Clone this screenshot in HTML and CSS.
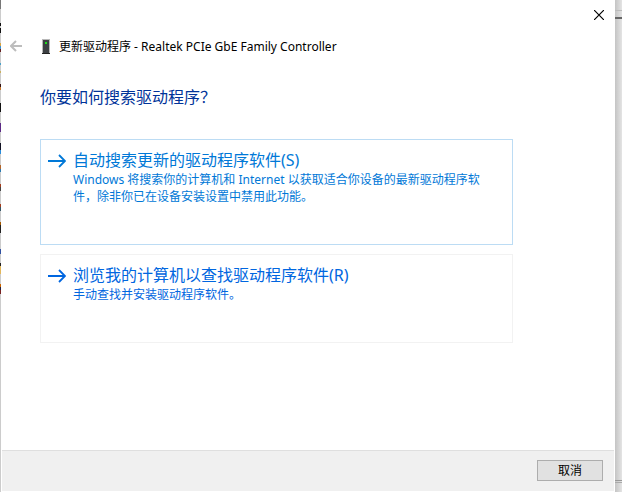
FILE: index.html
```html
<!DOCTYPE html>
<html lang="zh-CN">
<head>
    <meta charset="UTF-8">
    <meta name="viewport" content="width=device-width, initial-scale=1.0">
    <title>更新驱动程序</title>
    <link rel="stylesheet" href="styles.css">
</head>
<body>

<div class="edge-left"></div>

<div class="dialog">
    <div class="titlebar">
        <button type="button" class="close" aria-label="关闭">
            <svg width="10" height="10" viewBox="0 0 10 10"><path d="M0 0L10 10M10 0L0 10" stroke="#000" stroke-width="1.2"/></svg>
        </button>
    </div>

    <header>
        <button type="button" class="back" aria-label="返回">
            <svg width="12" height="12" viewBox="0 0 12 12"><path d="M6 1L1 6L6 11M1 6H12" fill="none" stroke="#bdbdbd" stroke-width="2"/></svg>
        </button>
        <svg class="device" width="8" height="15" viewBox="0 0 8 15">
            <rect x="0" y="0" width="8" height="14" fill="#b8b8b8"/>
            <rect x="1" y="1" width="6" height="13" fill="#3c4043"/>
            <rect x="3" y="3" width="2" height="2" fill="#1be01b"/>
            <rect x="0" y="14" width="8" height="1" fill="#222"/>
        </svg>
        <span>更新驱动程序 - Realtek PCIe GbE Family Controller</span>
    </header>

    <main>
        <h1>你要如何搜索驱动程序？</h1>

        <button type="button" class="option selected">
            <svg class="arrow" width="18" height="14" viewBox="0 0 18 14"><path d="M0 7H17M11 1L17 7L11 13" fill="none" stroke="currentColor" stroke-width="1.8"/></svg>
            <span class="option-text">
                <span class="option-title">自动搜索更新的驱动程序软件(S)</span>
                <span class="option-note">Windows 将搜索你的计算机和 Internet 以获取适合你设备的最新驱动程序软件，除非你已在设备安装设置中禁用此功能。</span>
            </span>
        </button>

        <button type="button" class="option">
            <svg class="arrow" width="18" height="14" viewBox="0 0 18 14"><path d="M0 7H17M11 1L17 7L11 13" fill="none" stroke="currentColor" stroke-width="1.8"/></svg>
            <span class="option-text">
                <span class="option-title">浏览我的计算机以查找驱动程序软件(R)</span>
                <span class="option-note">手动查找并安装驱动程序软件。</span>
            </span>
        </button>
    </main>

    <footer>
        <button type="button" class="cancel">取消</button>
    </footer>
</div>

<div class="edge-right"></div>

</body>
</html>
```

FILE: styles.css
```css
* {
    box-sizing: border-box;
}

body {
    margin: 0;
    min-height: 100vh;
    display: grid;
    grid-template-columns: 1px 1fr 7px;
    background-color: #fff;
    color: #000;
    font-family: "Noto Sans", "Noto Sans CJK SC", sans-serif;
    font-size: 12px;
}

button {
    margin: 0;
    padding: 0;
    border: none;
    background: none;
    font: inherit;
    cursor: pointer;
}

svg {
    display: block;
    flex-shrink: 0;
}

/* slivers of the window behind the dialog */
.edge-left {
    background: linear-gradient(#777 9px, #ccc 9px 23px, #111 23px 26px, #ccc 26px 28px, #111 28px 33px, #ccc 33px 43px, #d9a441 43px 46px, #3a8fd0 46px 49px, #622 49px 52px, #ccc 52px 63px, #4aa0c8 63px 65px, #ccc 65px 71px, #c9b060 71px 73px, #ccc 73px 84px, #311 84px 87px, #c77a30 87px 90px, #ccc 90px 103px, #111 103px 112px, #ccc 112px 123px, #5b2a85 123px 132px, #ccc 132px 143px, #112 143px 150px, #2a8ad8 150px 154px, #ccc 154px 165px, #b5652a 165px 169px, #2a7ab0 169px 172px, #ccc 172px 184px, #a33d1c 184px 187px, #444 187px 191px, #ccc 191px 204px, #a33d1c 204px 207px, #356 207px 211px, #ccc 211px 222px, #a65a00 222px 225px, #222 225px 233px, #ccc 233px 249px, #3050a0 249px 254px, #ccc 254px 263px, #222 263px 266px, #e2b65a 266px 274px, #ccc 274px 284px, #c60 284px 287px, #224 287px 290px, #722 290px 294px, #ccc 294px);
}

.edge-right {
    background:
        linear-gradient(transparent 10px, #bbb 10px 11px, transparent 11px 17px, #666 17px 19px, transparent 19px),
        linear-gradient(to top, transparent 9px, #aaa 9px 10px, transparent 10px 11px, #999 11px 12px, transparent 12px),
        linear-gradient(to right, #c4c4c4, #e4e4e4);
}

.dialog {
    display: flex;
    flex-direction: column;
    padding: 0 1px 1px 1px;
}

.titlebar {
    display: flex;
    justify-content: flex-end;
    height: 30px;
}

.close {
    padding: 10px;
}

header {
    display: flex;
    align-items: center;
    height: 32px;
    padding-left: 8px;
}

.back {
    margin-right: 20px;
}

.device {
    margin-right: 9px;
}

main {
    flex: 1;
    display: flex;
    flex-direction: column;
    gap: 9px;
    padding: 23px 101px 0 38px;
}

h1 {
    margin: 0 0 21px;
    color: #003399;
    font-size: 16px;
    font-weight: normal;
    line-height: 24px;
}

.option {
    display: flex;
    align-items: flex-start;
    gap: 7px;
    min-height: 89px;
    padding: 10px 24px 0 7px;
    border: 1px solid #f2f2f2;
    color: #0066e0;
    text-align: left;
}

.option.selected {
    min-height: 106px;
    border-color: #bcdcf4;
    color: #0078d7;
}

.arrow {
    margin-top: 4px;
}

.option-text {
    display: flex;
    flex-direction: column;
    gap: 1px;
}

.option-title {
    font-size: 16px;
    line-height: 20px;
}

.option-note {
    line-height: 17px;
}

footer {
    display: flex;
    justify-content: flex-end;
    padding: 9px 11px 10px;
    border-top: 1px solid #dfdfdf;
    background-color: #f0f0f0;
}

.cancel {
    width: 66px;
    height: 21px;
    border: 1px solid #adadad;
    background-color: #e1e1e1;
    line-height: 19px;
}
```
